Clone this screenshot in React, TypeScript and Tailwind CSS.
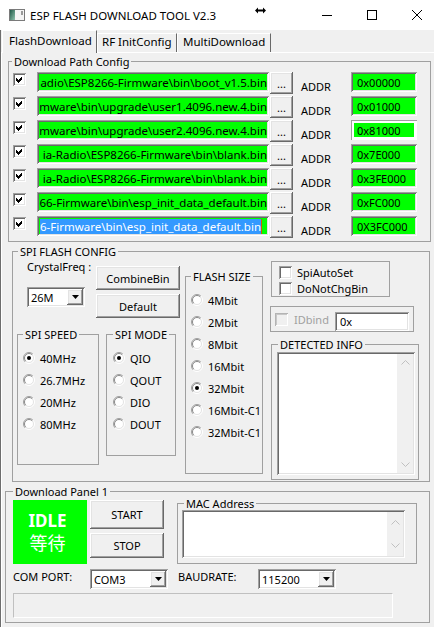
import type { ReactNode } from "react";

// classic win32 3D edges
const SUNKEN =
  "shadow-[inset_1px_1px_#a0a0a0,inset_-1px_-1px_#ffffff,inset_2px_2px_#696969,inset_-2px_-2px_#e3e3e3]";
const RAISED =
  "bg-[#f0f0f0] shadow-[inset_-1px_-1px_#696969,inset_1px_1px_#ffffff,inset_-2px_-2px_#a0a0a0,inset_2px_2px_#e3e3e3]";
const RING =
  "shadow-[inset_1px_1px_#a0a0a0,inset_-1px_-1px_#ffffff,inset_0_0_0_3px_#ffffff]";

// the edit boxes are scrolled to the end, only the tail of each path shows
const rows = [
  { path: "adio\\ESP8266-Firmware\\bin\\boot_v1.5.bin", addr: "0x00000" },
  { path: "mware\\bin\\upgrade\\user1.4096.new.4.bin", addr: "0x01000" },
  { path: "mware\\bin\\upgrade\\user2.4096.new.4.bin", addr: "0x81000", ring: true },
  { path: "ia-Radio\\ESP8266-Firmware\\bin\\blank.bin", addr: "0x7E000" },
  { path: "ia-Radio\\ESP8266-Firmware\\bin\\blank.bin", addr: "0x3FE000" },
  { path: "66-Firmware\\bin\\esp_init_data_default.bin", addr: "0xFC000" },
  { path: "6-Firmware\\bin\\esp_init_data_default.bin", addr: "0X3FC000", selected: true },
];

function Group({
  label,
  className = "",
  legend = "",
  children,
}: {
  label: string;
  className?: string;
  legend?: string;
  children?: ReactNode;
}) {
  return (
    <fieldset className={`border border-[#a0a0a0] shrink-0 ${className}`}>
      <legend className={`px-[2px] leading-[13px] whitespace-nowrap ${legend}`}>{label}</legend>
      {children}
    </fieldset>
  );
}

function CheckBox({ checked, disabled, className = "" }: { checked?: boolean; disabled?: boolean; className?: string }) {
  return (
    <span
      className={`block w-[13px] h-[13px] shrink-0 ${
        disabled
          ? "bg-[#f0f0f0] shadow-[inset_1px_1px_#b4b4b4,inset_-1px_-1px_#ffffff,inset_2px_2px_#c8c8c8]"
          : `bg-white ${SUNKEN}`
      } ${className}`}
    >
      {checked && (
        <svg width="13" height="13" viewBox="0 0 13 13" shapeRendering="crispEdges">
          <polygon points="3,5 5,7 9,3 9,6 5,10 3,8" fill="#000" />
        </svg>
      )}
    </span>
  );
}

function Radio({ on }: { on?: boolean }) {
  return (
    <svg width="12" height="12" viewBox="0 0 12 12" className="shrink-0">
      <circle cx="6" cy="6" r="5" fill="#fff" />
      <path d="M2.1 9.9 A5.5 5.5 0 0 1 9.9 2.1" fill="none" stroke="#a0a0a0" />
      <path d="M9.9 2.1 A5.5 5.5 0 0 1 2.1 9.9" fill="none" stroke="#fff" />
      <path d="M2.8 9.2 A4.5 4.5 0 0 1 9.2 2.8" fill="none" stroke="#8a8a8a" />
      <path d="M9.2 2.8 A4.5 4.5 0 0 1 2.8 9.2" fill="none" stroke="#e3e3e3" />
      {on && <circle cx="6" cy="6" r="2" fill="#000" />}
    </svg>
  );
}

function RadioList({ items, checked, pad }: { items: string[]; checked: string; pad: string }) {
  return (
    <div className="pt-[6px] flex flex-col">
      {items.map((t) => (
        <div key={t} className={`h-[22px] flex items-center whitespace-nowrap ${pad}`}>
          <Radio on={t === checked} />
          <span className="ml-[5px]">{t}</span>
        </div>
      ))}
    </div>
  );
}

function Button({ children, className = "" }: { children: ReactNode; className?: string }) {
  return <div className={`${RAISED} flex items-center justify-center shrink-0 ${className}`}>{children}</div>;
}

function Combo({ value, className = "" }: { value: string; className?: string }) {
  return (
    <div className={`h-[20px] bg-white ${SUNKEN} p-[2px] flex shrink-0 ${className}`}>
      <span className="flex-1 pl-[2px] pt-[1px] flex items-center">{value}</span>
      <span className={`w-[16px] ${RAISED} flex items-center justify-center`}>
        <svg width="7" height="4" viewBox="0 0 7 4">
          <path d="M0 0H7L3.5 4Z" fill="#000" />
        </svg>
      </span>
    </div>
  );
}

function Memo({ className = "", py = "py-[6px]" }: { className?: string; py?: string }) {
  return (
    <div className={`bg-white ${SUNKEN} p-[2px] flex justify-end shrink-0 ${className}`}>
      <div className={`w-[16px] bg-[#f0f0f0] flex flex-col justify-between items-center ${py}`}>
        <svg width="9" height="5" viewBox="0 0 9 5">
          <path d="M0.5 4.5L4.5 0.5L8.5 4.5" fill="none" stroke="#c0c0c0" />
        </svg>
        <svg width="9" height="5" viewBox="0 0 9 5">
          <path d="M0.5 0.5L4.5 4.5L8.5 0.5" fill="none" stroke="#c0c0c0" />
        </svg>
      </div>
    </div>
  );
}

function PathRow({ path, addr, selected, ring }: { path: string; addr: string; selected?: boolean; ring?: boolean }) {
  return (
    <div className="h-[24px] flex items-start">
      <CheckBox checked className="mt-[1px]" />
      <div className={`ml-[11px] w-[232px] h-[20px] bg-[#00ff00] ${SUNKEN} px-[2px] flex`}>
        <div
          className={`flex-1 overflow-hidden flex justify-end items-center whitespace-nowrap text-[11.5px] ${
            selected ? "pr-[5px]" : ""
          }`}
        >
          <span className={`shrink-0 leading-[15px] ${selected ? "bg-[#3399ff] text-white" : ""}`}>{path}</span>
          {selected && <span className="shrink-0 w-[1px] h-[15px] bg-[#d05a00]" />}
        </div>
      </div>
      <Button className="ml-[1px] w-[23px] h-[22px]">...</Button>
      <span className="ml-[8px] w-[50px] mt-[8px]">ADDR</span>
      <div className={`w-[66px] h-[20px] bg-[#00ff00] ${ring ? RING : SUNKEN} pl-[6px] flex items-center`}>
        {addr}
      </div>
    </div>
  );
}

export default function App() {
  return (
    <div className="w-[434px] h-[627px] overflow-hidden bg-[#f0f0f0] flex flex-col text-black text-[11px] leading-[13px] font-['Noto_Sans','Noto_Sans_CJK_SC',sans-serif]">
      {/* title bar */}
      <div className="h-[30px] shrink-0 bg-white flex items-center overflow-hidden">
        <svg className="ml-[9px] shrink-0" width="16" height="12" viewBox="0 0 16 12">
          <defs>
            <linearGradient id="ic" x1="0" y1="0" x2="1" y2="1">
              <stop offset="0" stopColor="#1f5a48" />
              <stop offset="1" stopColor="#8fc2ad" />
            </linearGradient>
          </defs>
          <rect x="0.5" y="0.5" width="15" height="11" fill="#f4f4f4" stroke="#7a7a7a" />
          <rect x="1" y="1" width="5" height="10" fill="url(#ic)" />
          <rect x="12" y="2" width="2" height="4" fill="#9a9a9a" />
        </svg>
        <span className="ml-[5px] w-[225px] shrink-0 text-[11.5px] whitespace-nowrap">ESP FLASH DOWNLOAD TOOL V2.3</span>
        <svg className="self-start mt-[7px] shrink-0" width="11" height="7" viewBox="0 0 11 7">
          <path d="M0 3.5L3 0.5V2.5H8V0.5L11 3.5L8 6.5V4.5H3V6.5Z" fill="#000" />
        </svg>
        <div className="ml-[38px] flex shrink-0">
          <div className="w-[45px] h-[30px] flex items-center justify-center">
            <svg width="10" height="1"><rect width="10" height="1" fill="#000" /></svg>
          </div>
          <div className="w-[45px] h-[30px] flex items-center justify-center">
            <svg width="10" height="10"><rect x="0.5" y="0.5" width="9" height="9" fill="none" stroke="#000" /></svg>
          </div>
          <div className="w-[45px] h-[30px] flex items-center justify-center">
            <svg width="10" height="10"><path d="M0 0L10 10M10 0L0 10" stroke="#000" /></svg>
          </div>
        </div>
      </div>

      <div className="flex-1 border-l border-[#6d6d6d] flex flex-col">
        {/* tabs */}
        <div className="h-[22px] shrink-0 pl-[1px] flex items-end">
          <div className="relative z-10 -mb-[1px] h-[23px] w-[95px] bg-[#f0f0f0] border-t border-l border-white border-r border-r-[#696969] pl-[6px] pt-[3px] text-[11.5px] whitespace-nowrap">
            FlashDownload
          </div>
          <div className="h-[19px] w-[80px] border-t border-l border-white border-r border-r-[#696969] pl-[4px] pt-[1px] text-[11.5px] whitespace-nowrap">
            RF InitConfig
          </div>
          <div className="h-[19px] w-[94px] border-t border-l border-white border-r border-r-[#696969] pl-[5px] pt-[1px] text-[11.5px] whitespace-nowrap">
            MultiDownload
          </div>
        </div>

        {/* tab page */}
        <div className="flex-1 border-t border-l border-white flex flex-col">
          <Group label="Download Path Config" className="ml-[6px] mt-[2px] w-[423px] pb-[1px]" legend="ml-[3px]">
            <div className="pl-[4px] pt-[4px] flex flex-col">
              {rows.map((r, i) => (
                <PathRow key={i} {...r} />
              ))}
            </div>
          </Group>

          <Group label="SPI FLASH CONFIG" className="ml-[10px] mt-[3px] w-[418px] h-[237px]" legend="ml-[5px]">
            <div className="flex items-start">
              {/* left column */}
              <div className="ml-[4px] w-[163px] shrink-0 flex flex-col">
                <div className="h-[70px] flex">
                  <div className="ml-[10px] w-[69px] flex flex-col">
                    <span className="mt-[2px] whitespace-nowrap">CrystalFreq :</span>
                    <Combo value="26M" className="mt-[14px] w-[58px]" />
                  </div>
                  <div className="w-[84px] flex flex-col">
                    <Button className="mt-[8px] h-[24px]">CombineBin</Button>
                    <Button className="mt-[4px] h-[24px]">Default</Button>
                  </div>
                </div>
                <div className="flex items-start">
                  <Group label="SPI SPEED" className="w-[82px] h-[137px]" legend="ml-[5px]">
                    <RadioList items={["40MHz", "26.7MHz", "20MHz", "80MHz"]} checked="40MHz" pad="pl-[5px]" />
                  </Group>
                  <Group label="SPI MODE" className="ml-[7px] w-[70px] h-[128px]" legend="ml-[6px]">
                    <RadioList items={["QIO", "QOUT", "DIO", "DOUT"]} checked="QIO" pad="pl-[6px]" />
                  </Group>
                </div>
              </div>

              {/* flash size */}
              <Group label="FLASH SIZE" className="ml-[5px] mt-[12px] w-[78px] h-[204px]" legend="ml-[5px]">
                <RadioList
                  items={["4Mbit", "2Mbit", "8Mbit", "16Mbit", "32Mbit", "16Mbit-C1", "32Mbit-C1"]}
                  checked="32Mbit"
                  pad="pl-[5px]"
                />
              </Group>

              {/* right column */}
              <div className="ml-[7px] w-[150px] shrink-0 flex flex-col">
                <div className="ml-[1px] mt-[3px] w-[119px] h-[36px] border border-[#a0a0a0] pl-[7px] pt-[3px] flex flex-col">
                  <div className="h-[17px] flex items-center">
                    <CheckBox />
                    <span className="ml-[5px]">SpiAutoSet</span>
                  </div>
                  <div className="h-[17px] flex items-center">
                    <CheckBox />
                    <span className="ml-[5px]">DoNotChgBin</span>
                  </div>
                </div>
                <div className="mt-[9px] w-[144px] h-[26px] border border-[#a0a0a0] pl-[4px] flex items-center">
                  <CheckBox disabled className="w-[12px] h-[12px]" />
                  <span className="ml-[6px] w-[41px] text-[#a0a0a0]">IDbind</span>
                  <div className={`self-end w-[74px] h-[19px] bg-white ${SUNKEN} pl-[5px] flex items-center`}>0x</div>
                </div>
                <Group label="DETECTED INFO" className="ml-[1px] mt-[6px] w-[148px] h-[142px]" legend="ml-[6px]">
                  <Memo className="ml-[5px] mt-[1px] w-[138px] h-[123px]" />
                </Group>
              </div>
            </div>
          </Group>

          <Group label="Download Panel 1" className="ml-[3px] mt-[3px] w-[425px] h-[138px]" legend="ml-[7px]">
            <div className="flex items-start">
              <div className="ml-[7px] mt-[2px] w-[74px] h-[64px] shrink-0 bg-[#00ff00] text-white pr-[5px] flex flex-col items-center justify-center">
                <span className="text-[17px] leading-[20px] font-bold">IDLE</span>
                <span className="text-[18px] leading-[22px] font-['Noto_Sans_CJK_SC',sans-serif]">等待</span>
              </div>
              <div className="ml-[3px] w-[74px] shrink-0 flex flex-col">
                <Button className="mt-[2px] h-[29px]">START</Button>
                <Button className="mt-[4px] h-[25px]">STOP</Button>
              </div>
              <Group label="MAC Address" className="ml-[13px] -mt-[1px] w-[240px] h-[67px]" legend="ml-[6px]">
                <Memo className="ml-[4px] w-[223px] h-[48px]" py="py-[8px]" />
              </Group>
            </div>
            <div className="mt-[5px] h-[20px] flex items-start">
              <span className="ml-[7px] mt-[1px] w-[77px] shrink-0 whitespace-nowrap">COM PORT:</span>
              <Combo value="COM3" className="w-[78px]" />
              <span className="ml-[10px] mt-[1px] w-[80px] shrink-0 whitespace-nowrap">BAUDRATE:</span>
              <Combo value="115200" className="w-[78px]" />
            </div>
            <div className="ml-[7px] mt-[4px] w-[380px] h-[25px] border border-t-[#c0c0c0] border-l-[#c0c0c0] border-b-white border-r-white" />
          </Group>
        </div>
      </div>
    </div>
  );
}
